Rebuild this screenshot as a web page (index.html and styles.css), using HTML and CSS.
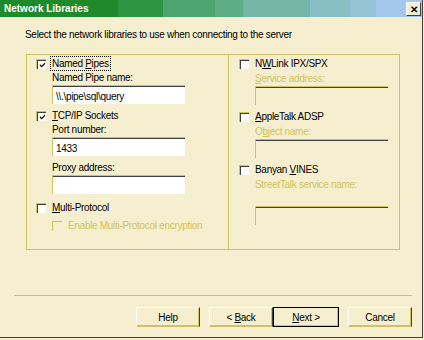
FILE: index.html
```html
<!DOCTYPE html>
<html lang="en">
<head>
    <meta charset="UTF-8" />
    <title>Network Libraries</title>
    <link rel="stylesheet" href="styles.css">
</head>
<body>

<div class="window">
    <div class="titlebar">
        <span class="title">Network Libraries</span>
        <span class="close">&#x2715;</span>
    </div>

    <p class="intro">Select the network libraries to use when connecting to the server</p>

    <div class="group">
        <div class="col">
            <div class="check-row">
                <span class="box checked"><svg viewBox="0 0 8 8"><path d="M1 3.5 L3 5.5 L7 1.5 V3.5 L3 7.5 L1 5.5 Z"/></svg></span>
                <span class="label focus">Named <u>P</u>ipes</span>
            </div>
            <div class="sub">
                <div class="field-label">Named Pipe name:</div>
                <div class="input">\\.\pipe\sql\query</div>
            </div>

            <div class="check-row gap">
                <span class="box checked"><svg viewBox="0 0 8 8"><path d="M1 3.5 L3 5.5 L7 1.5 V3.5 L3 7.5 L1 5.5 Z"/></svg></span>
                <span class="label"><u>T</u>CP/IP Sockets</span>
            </div>
            <div class="sub">
                <div class="field-label">Port number:</div>
                <div class="input">1433</div>
                <div class="field-label proxy">Proxy address:</div>
                <div class="input"></div>
            </div>

            <div class="check-row multi">
                <span class="box"></span>
                <span class="label"><u>M</u>ulti-Protocol</span>
            </div>
            <div class="sub">
                <div class="check-row disabled">
                    <span class="box"></span>
                    <span class="label">Enable Multi-Protocol encryption</span>
                </div>
            </div>
        </div>

        <div class="col right">
            <div class="check-row">
                <span class="box"></span>
                <span class="label">N<u>W</u>Link IPX/SPX</span>
            </div>
            <div class="sub disabled">
                <div class="field-label"><u>S</u>ervice address:</div>
                <div class="input"></div>
            </div>

            <div class="check-row gap">
                <span class="box"></span>
                <span class="label"><u>A</u>ppleTalk ADSP</span>
            </div>
            <div class="sub disabled">
                <div class="field-label">O<u>b</u>ject name:</div>
                <div class="input"></div>
            </div>

            <div class="check-row gap-lg">
                <span class="box"></span>
                <span class="label">Banyan <u>V</u>INES</span>
            </div>
            <div class="sub disabled">
                <div class="field-label">StreetTalk service name:</div>
                <div class="input street"></div>
            </div>
        </div>
    </div>

    <div class="separator"></div>

    <div class="buttons">
        <button class="btn">Help</button>
        <div class="nav">
            <button class="btn">&lt; <u>B</u>ack</button>
            <button class="btn default"><u>N</u>ext &gt;</button>
        </div>
        <button class="btn">Cancel</button>
    </div>
</div>

</body>
</html>
```

FILE: styles.css
```css
* {
    box-sizing: border-box;
    margin: 0;
    padding: 0;
}
body {
    background: #f6efcf;
    font-family: 'Liberation Sans', Arial, sans-serif;
    font-size: 10px;
    letter-spacing: -0.3px;
    color: #000;
}
.window {
    width: 423px;
    height: 338px;
    border-right: 1px solid #404040;
    border-bottom: 1px solid #404040;
}

/* barra de titulo */
.titlebar {
    height: 17px;
    display: flex;
    align-items: center;
    justify-content: space-between;
    padding: 0 1px 0 4px;
    background: linear-gradient(90deg,
        #1e8a2a 0, #1e8a2a 118px,
        #2c9541 118px, #2c9541 163px,
        #4ea56f 163px, #4ea56f 215px,
        #5eae85 215px, #5eae85 243px,
        #76b6a8 243px, #76b6a8 310px,
        #88bfc4 310px, #88bfc4 350px,
        #96c2d6 350px, #96c2d6 376px,
        #a4c8ec 376px);
}
.title {
    color: #fff;
    font-weight: 700;
    font-size: 10px;
    letter-spacing: 0;
}
.close {
    width: 15px;
    height: 14px;
    margin-top: 1px;
    display: flex;
    align-items: center;
    justify-content: center;
    background: #f6efcf;
    border-top: 1px solid #fff;
    border-left: 1px solid #fff;
    border-right: 1px solid #404040;
    border-bottom: 1px solid #404040;
    font-size: 10px;
    font-weight: 700;
    letter-spacing: 0;
}

.intro {
    margin: 11px 0 0 25px;
    line-height: 13px;
}

/* grupo de bibliotecas */
.group {
    margin: 13px 0 0 26px;
    width: 374px;
    height: 196px;
    border: 1px solid #cfc35e;
    display: grid;
    grid-template-columns: 201px 1fr;
}
.col {
    padding: 2px 0 0 9px;
}
.col.right {
    border-left: 1px solid #cfc35e;
    padding-left: 10px;
}
.check-row {
    display: flex;
    align-items: center;
    height: 13px;
}
.check-row.gap {
    margin-top: 5px;
}
.check-row.gap-lg {
    margin-top: 5px;
}
.check-row.multi {
    margin-top: 7px;
}
.box {
    width: 10px;
    height: 10px;
    margin-right: 6px;
    background: #fff;
    border-top: 1px solid #cfc35e;
    border-left: 1px solid #cfc35e;
    box-shadow: inset 1px 1px #404040;
    display: flex;
    align-items: center;
    justify-content: center;
}
.box svg {
    width: 7px;
    height: 7px;
    margin: 1px 0 0 1px;
}
.label {
    line-height: 13px;
    padding: 0 1px;
    margin-left: -1px;
}
.label.focus {
    outline: 1px dotted #000;
    outline-offset: 0;
}
.sub {
    margin-left: 16px;
}
.field-label {
    line-height: 13px;
    margin-top: 1px;
}
.field-label.proxy {
    margin-top: 5px;
}
.input {
    width: 133px;
    height: 19px;
    margin-top: 1px;
    padding: 4px 0 0 3px;
    background: #fff;
    border-top: 1px solid #cfc35e;
    border-left: 1px solid #cfc35e;
    box-shadow: inset 0 1px #404040;
    line-height: 13px;
}
.sub.disabled .input {
    background: transparent;
}
.sub.disabled .field-label {
    margin-top: 2px;
}
.sub.disabled .input.street {
    margin-top: 15px;
}
.disabled,
.disabled .label {
    color: #cfc35e;
}
.check-row.disabled {
    margin-top: 5px;
}
.check-row.disabled .box {
    background: transparent;
    box-shadow: none;
}

/* rodape */
.separator {
    margin: 45px 0 0 14px;
    width: 398px;
    border-top: 1px solid #cfc35e;
}
.buttons {
    display: flex;
    justify-content: flex-end;
    gap: 9px;
    margin-top: 11px;
    padding-right: 10px;
}
.nav {
    display: flex;
}
.btn {
    width: 64px;
    height: 20px;
    font-family: inherit;
    font-size: 10px;
    letter-spacing: -0.3px;
    background: #f6efcf;
    border: none;
    border-top: 1px solid #fff;
    border-left: 1px solid #fff;
    border-right: 1px solid #404040;
    border-bottom: 1px solid #cfc35e;
    box-shadow: inset -1px -1px #cfc35e;
}
.btn.default {
    width: 66px;
    border: 1px solid #000;
    box-shadow: inset -1px -1px #cfc35e;
}
```
